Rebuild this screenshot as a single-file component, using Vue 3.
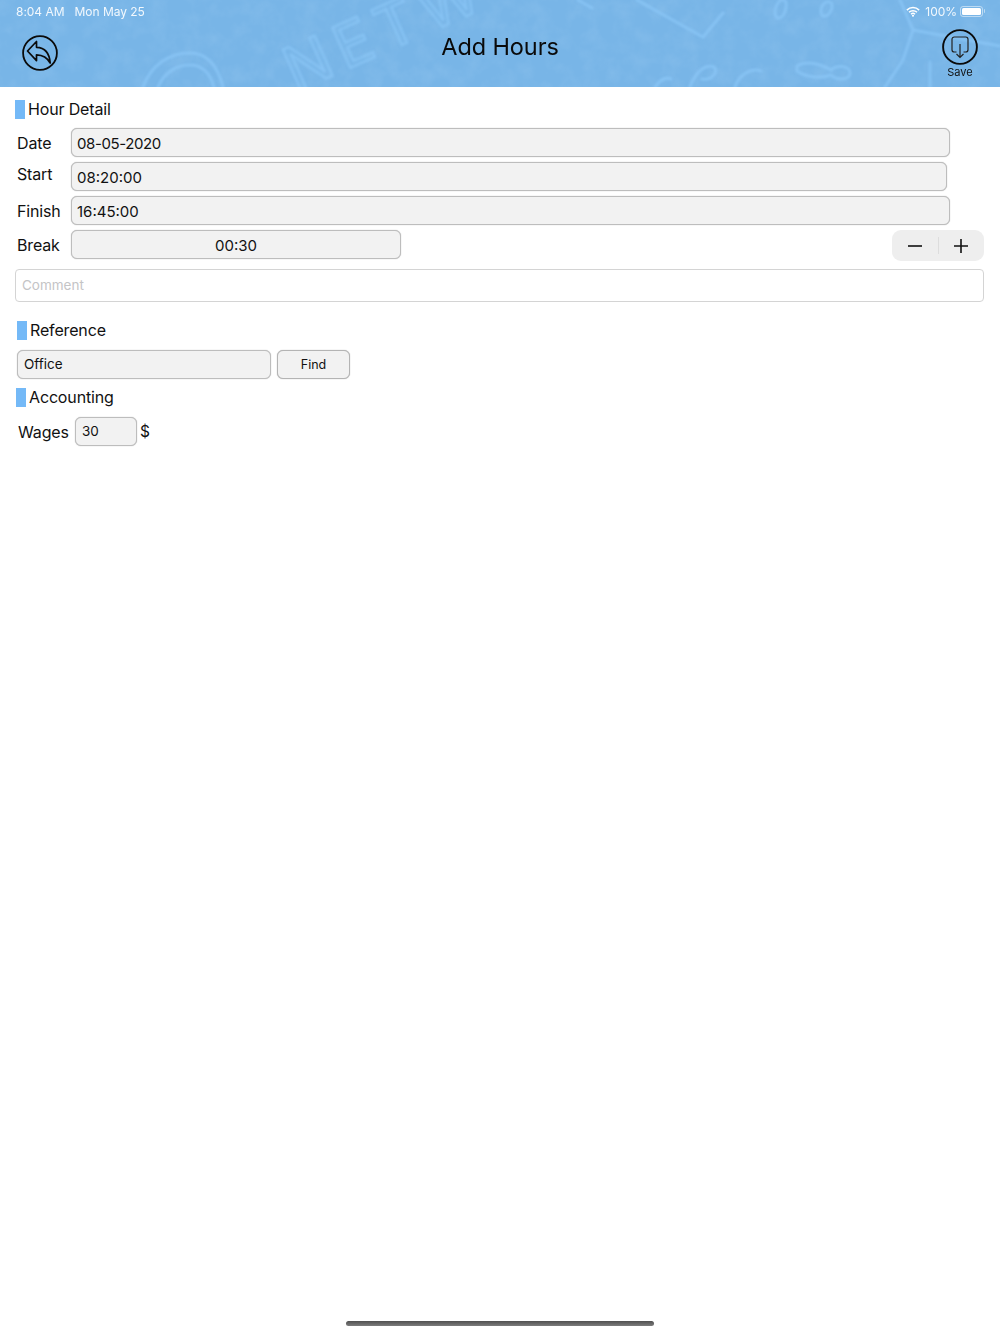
<script setup>
const fields = [
  { label: 'Date', value: '08-05-2020', cls: 'w-full tight' },
  { label: 'Start', value: '08:20:00', cls: 'w-short', labelCls: 'raised' },
  { label: 'Finish', value: '16:45:00', cls: 'w-full' },
]
</script>

<template>
  <div class="page">
    <header class="header">
      <svg class="doodles" viewBox="0 0 1000 87" preserveAspectRatio="none" aria-hidden="true">
        <defs>
          <filter id="chalk-blur" x="-5%" y="-5%" width="110%" height="110%"><feGaussianBlur stdDeviation="0.9" /></filter>
          <filter id="mottle" x="0" y="0" width="100%" height="100%">
            <feTurbulence type="fractalNoise" baseFrequency="0.06" numOctaves="3" seed="4" />
            <feColorMatrix type="matrix" values="0 0 0 0 0.62  0 0 0 0 0.82  0 0 0 0 1  1.1 0 0 0 -0.42" />
          </filter>
        </defs>
        <rect width="1000" height="87" filter="url(#mottle)" opacity=".18" />
        <g filter="url(#chalk-blur)">
          <g fill="none" stroke="#8cc8f8" stroke-width="3" stroke-linecap="round" opacity=".7">
            <path d="M143 87c8-22 26-34 47-34 18 0 28 14 33 34" />
            <path d="M158 87c6-14 18-22 32-22 12 0 20 8 24 22" />
            <path d="M637 0l66 37 20-24M578 0l14 8" />
            <path d="M777 18c-5-6 1-20 7-18 5 2 1 20-7 18zM823 16c-5-5 0-16 7-14 5 2 0 16-7 14z" />
            <path d="M797 66c10-6 24-2 34 4 6-6 19-4 19 3s-13 8-19 2c-10 4-26 2-34-4z" />
            <path d="M655 87c6-8 12-10 16-8M690 87c4-12 14-24 24-20 5 4-2 14-12 12M735 87c4-12 16-20 26-16" />
            <path d="M900 0l13 30-10 30-18 27M913 30l87 16M930 62v25" />
          </g>
          <text x="296" y="92" class="chalk" transform="rotate(-24 296 92)">NETWORK</text>
        </g>
      </svg>

      <div class="status">
        <div class="status-left"><span>8:04 AM</span><span>Mon May 25</span></div>
        <div class="status-right">
          <svg class="wifi" viewBox="0 0 16 12" aria-hidden="true">
            <path d="M1 4.400a10 10 0 0 1 14 0M3.400 6.900a6.600 6.600 0 0 1 9.200 0M5.700 9.100a3.300 3.300 0 0 1 4.600 0" fill="none" stroke="#fff" stroke-width="1.700" />
            <circle cx="8" cy="10.800" r="1.200" fill="#fff" />
          </svg>
          <span>100%</span>
          <span class="battery"><span class="battery-fill"></span></span>
        </div>
      </div>

      <div class="nav">
        <svg class="back" viewBox="0 0 36 36" aria-label="Back">
          <circle cx="18" cy="18" r="16.900" fill="none" stroke="#0a0a0a" stroke-width="1.800" />
          <path d="M5.500 16 14.500 6.500v5.800c8.500.3 13 6 13.700 15.700-3-5.600-7.200-8-13.700-8.200v5.800z" fill="none" stroke="#0a0a0a" stroke-width="1.700" stroke-linejoin="round" />
        </svg>
        <h1 class="title">Add Hours</h1>
        <div class="save">
          <svg class="save-icon" viewBox="0 0 36 36" aria-hidden="true">
            <circle cx="18" cy="18" r="16.900" fill="none" stroke="#0a0a0a" stroke-width="1.900" />
            <path d="M14.500 23h-2.200a2.300 2.300 0 0 1-2.300-2.300V10.300A2.300 2.300 0 0 1 12.300 8h11.400a2.300 2.300 0 0 1 2.300 2.300v10.400a2.300 2.300 0 0 1-2.300 2.300h-2.200" fill="none" stroke="#222" stroke-width="1.200" />
            <path d="M18 15v13.500M14.500 25l3.500 3.500 3.500-3.500" fill="none" stroke="#222" stroke-width="1.200" />
          </svg>
          <span>Save</span>
        </div>
      </div>
    </header>

    <main class="content">
      <div class="section-head first"><span class="mark"></span>Hour Detail</div>

      <div class="rows">
        <div v-for="f in fields" :key="f.label" class="row">
          <span class="label" :class="f.labelCls">{{ f.label }}</span>
          <div class="field" :class="f.cls">{{ f.value }}</div>
        </div>
        <div class="row">
          <span class="label">Break</span>
          <div class="field break">00:30</div>
          <div class="stepper">
            <span class="step"><svg viewBox="0 0 14 14" aria-label="Decrease"><path d="M0 7h14" /></svg></span>
            <span class="step-sep"></span>
            <span class="step"><svg viewBox="0 0 14 14" aria-label="Increase"><path d="M0 7h14M7 0v14" /></svg></span>
          </div>
        </div>
      </div>

      <div class="comment">Comment</div>

      <div class="section-head reference"><span class="mark"></span>Reference</div>
      <div class="ref-row">
        <div class="field small office">Office</div>
        <button class="find">Find</button>
      </div>

      <div class="section-head accounting"><span class="mark"></span>Accounting</div>
      <div class="wage-row">
        <span class="label wage-label">Wages</span>
        <div class="field small wage">30</div>
        <span class="dollar">$</span>
      </div>
    </main>

    <div class="home-bar"></div>
  </div>
</template>

<style>
html, body { margin: 0; background: #fff; }
</style>

<style scoped>
.page {
  width: 1000px;
  height: 1334px;
  display: flex;
  flex-direction: column;
  font-family: Inter, "Liberation Sans", sans-serif;
  color: #111;
  background: #fff;
  overflow: hidden;
}

.header {
  position: relative;
  height: 87px;
  flex: none;
  background: #78b5e7;
  overflow: hidden;
}
.doodles { position: absolute; inset: 0; width: 100%; height: 100%; }
.chalk {
  font-size: 60px;
  letter-spacing: 9px;
  fill: none;
  stroke: #8cc8f8;
  stroke-width: 2.500;
  opacity: .7;
}

.status {
  position: relative;
  display: flex;
  justify-content: space-between;
  align-items: center;
  height: 23px;
  padding: 0 15px 0 16px;
  color: #f2f8fd;
  font-size: 12px;
  letter-spacing: -.03px;
}
.status-left { display: flex; gap: 10px; }
.status-right { display: flex; align-items: center; gap: 3px; }
.wifi { width: 14px; height: 11px; margin-right: 2px; }
.battery {
  position: relative;
  box-sizing: border-box;
  width: 23px;
  height: 11px;
  margin-right: 2px;
  padding: 1px;
  border: 1px solid rgba(255, 255, 255, .5);
  border-radius: 3px;
  display: block;
}
.battery::after {
  content: "";
  position: absolute;
  right: -3px;
  top: 2px;
  width: 1.500px;
  height: 4px;
  border-radius: 0 1px 1px 0;
  background: rgba(255, 255, 255, .5);
}
.battery-fill { display: block; width: 100%; height: 100%; background: #fff; border-radius: 1.500px; }

.nav {
  position: relative;
  display: flex;
  justify-content: space-between;
  align-items: flex-start;
  padding: 0 22px 0 22px;
  height: 64px;
}
.back { width: 36px; height: 36px; margin-top: 12px; }
.title {
  margin: 9px 0 0;
  font-size: 23.500px;
  line-height: 30px;
  font-weight: 400;
  color: #0a0a0a;
  letter-spacing: -.1px;
}
.save {
  width: 36px;
  margin-top: 6px;
  display: flex;
  flex-direction: column;
  align-items: center;
  font-size: 11px;
  line-height: 13px;
  color: #111;
}
.save-icon { width: 36px; height: 36px; flex: none; margin-bottom: 1px; }

.content { flex: 1; }
.section-head {
  display: flex;
  align-items: center;
  gap: 3px;
  font-size: 16px;
  letter-spacing: -.15px;
  line-height: 20px;
  height: 20px;
  color: #111;
}
.mark { width: 10px; height: 19px; background: #74b9f7; flex: none; }
.first { margin: 12px 0 0 15px; }
.reference { margin: 18px 0 0 17px; }
.accounting { margin: 8px 0 0 16px; }

.rows { display: flex; flex-direction: column; gap: 5px; margin-top: 9px; padding-left: 17px; }
.row { display: flex; align-items: center; height: 29px; }
.label { width: 54px; font-size: 16px; letter-spacing: -.15px; flex: none; color: #111; }
.raised { margin-bottom: 5px; }

.field {
  box-sizing: border-box;
  height: 29px;
  background: #f2f2f2;
  border: 1px solid #bdbdbd;
  box-shadow: 0 0 1px #a8a8a8;
  border-radius: 6px;
  padding: 1px 5px 0;
  display: flex;
  align-items: center;
  font-size: 15px;
  color: #111;
}
.w-full { width: 879px; }
.w-short { width: 876px; }
.tight { letter-spacing: -.4px; }
.break { width: 330px; justify-content: center; }

.stepper {
  margin-left: auto;
  margin-right: 16px;
  width: 92px;
  height: 31px;
  margin-top: 2px;
  background: #eee;
  border-radius: 9px;
  display: flex;
  align-items: center;
}
.step { flex: 1; display: flex; justify-content: center; }
.step svg { width: 14px; height: 14px; fill: none; stroke: #111; stroke-width: 1.600; }
.step-sep { width: 1px; height: 17px; background: #ddd; }

.comment {
  box-sizing: border-box;
  margin: 10px 16px 0 15px;
  height: 33px;
  border: 1px solid #d4d4d4;
  border-radius: 4px;
  padding: 0 6px 2px;
  display: flex;
  align-items: center;
  font-size: 13.500px;
  color: #c4c4c6;
}

.ref-row { display: flex; gap: 6px; margin: 10px 0 0 17px; }
.small { font-size: 13.500px; padding: 0 6px 1px; }
.office { width: 254px; }
.find {
  box-sizing: border-box;
  width: 73px;
  height: 29px;
  background: #f2f2f2;
  border: 1px solid #b4b4b4;
  box-shadow: 0 0 1px #a0a0a0;
  border-radius: 6px;
  font: inherit;
  font-size: 12.500px;
  color: #111;
  padding: 0 0 1px;
}

.wage-row { display: flex; align-items: center; margin: 10px 0 0 18px; height: 29px; }
.wage-label { width: 57px; }
.wage { width: 62px; }
.dollar { font-size: 15.500px; margin: 0 0 1px 3px; color: #111; }

.home-bar {
  flex: none;
  width: 308px;
  height: 5px;
  margin: 0 auto 8px;
  border-radius: 3px;
  background: linear-gradient(#505050, #7c7c7c);
}
</style>
